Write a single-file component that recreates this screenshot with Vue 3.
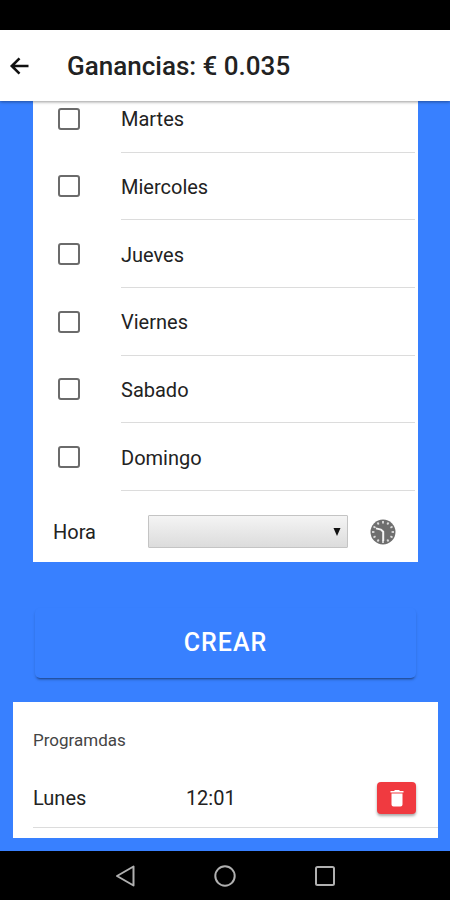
<script setup>
import { ref } from 'vue'

const days = ref([
  { name: 'Martes', checked: false },
  { name: 'Miercoles', checked: false },
  { name: 'Jueves', checked: false },
  { name: 'Viernes', checked: false },
  { name: 'Sabado', checked: false },
  { name: 'Domingo', checked: false },
])
const hour = ref('')
const scheduled = ref([{ day: 'Lunes', time: '12:01' }])
const ticks = Array.from({ length: 12 }, (_, i) => i * 30)

function removeItem(index) {
  scheduled.value.splice(index, 1)
}
</script>

<template>
  <div class="screen">
    <div class="status-bar"></div>

    <header class="toolbar">
      <button class="back" type="button" aria-label="Volver">
        <svg viewBox="0 0 20 20" width="20" height="20">
          <path d="M19.500 10H3M10.500 2.300L2.800 10l7.700 7.700" fill="none" stroke="#111" stroke-width="2.6" />
        </svg>
      </button>
      <h1>Ganancias: € 0.035</h1>
    </header>

    <main class="content">
      <section class="form-card">
        <ul class="days">
          <li v-for="day in days" :key="day.name">
            <label class="day">
              <input v-model="day.checked" type="checkbox" />
              <span class="day-name">{{ day.name }}</span>
            </label>
          </li>
        </ul>
        <div class="hour">
          <label for="hour">Hora</label>
          <div class="select-wrap">
            <select id="hour" v-model="hour">
              <option value=""></option>
              <option value="12:01">12:01</option>
            </select>
            <svg class="caret" viewBox="0 0 8 8" width="8" height="8">
              <path d="M0.500 0h7L4 8z" fill="#111" />
            </svg>
          </div>
          <svg class="clock" viewBox="0 0 26 26" width="26" height="26">
            <circle cx="13" cy="13" r="12.5" fill="#6e6e6e" />
            <g stroke="#dcdcdc" stroke-width="1.8">
              <path v-for="t in ticks" :key="t" d="M13 2v2.400" :transform="`rotate(${t} 13 13)`" />
            </g>
            <path d="M13.200 22V12.800L11 10.600 6 9.400" fill="none" stroke="#f4f4f4" stroke-width="2" stroke-linejoin="round" />
          </svg>
        </div>
      </section>

      <button class="create" type="button">CREAR</button>

      <section class="list-card">
        <h2>Programdas</h2>
        <ul class="scheduled">
          <li v-for="(item, i) in scheduled" :key="item.day">
            <span>{{ item.day }}</span>
            <span>{{ item.time }}</span>
            <button class="remove" type="button" aria-label="Eliminar" @click="removeItem(i)">
              <svg viewBox="0 0 14 18" width="14" height="18">
                <path d="M0.500 2h3.500L5 1h4l1 1h3.500v1.500H.500zM1.500 4.500h11V15.500a2 2 0 0 1-2 2H3.500a2 2 0 0 1-2-2z" fill="#fff" />
              </svg>
            </button>
          </li>
        </ul>
      </section>
    </main>

    <nav class="nav-bar">
      <button type="button" aria-label="Atrás">
        <svg viewBox="0 0 22 22" width="22" height="22">
          <path d="M19.500 1.500v19L3 11z" />
        </svg>
      </button>
      <button type="button" aria-label="Inicio">
        <svg viewBox="0 0 22 22" width="22" height="22">
          <circle cx="11" cy="11" r="9.700" />
        </svg>
      </button>
      <button type="button" aria-label="Recientes">
        <svg viewBox="0 0 22 22" width="22" height="22">
          <rect x="2" y="2" width="18" height="18" rx="1.500" />
        </svg>
      </button>
    </nav>
  </div>
</template>

<style>
body {
  margin: 0;
}
</style>

<style scoped>
.screen {
  display: flex;
  flex-direction: column;
  min-height: 100vh;
  background: #3880ff;
  color: #222;
  font-family: Roboto, "Liberation Sans", sans-serif;
  font-size: 20px;
  line-height: 24px;
}

button {
  padding: 0;
  border: 0;
  background: none;
  font: inherit;
  cursor: pointer;
}

svg {
  display: block;
}

ul {
  margin: 0;
  padding: 0;
  list-style: none;
}

.status-bar {
  height: 30px;
  background: #000;
}

.toolbar {
  position: relative;
  z-index: 1;
  display: flex;
  align-items: center;
  gap: 38px;
  height: 71px;
  padding-left: 9px;
  background: #fff;
  box-shadow: 0 1px 3px rgba(0, 0, 0, 0.4);
}

.toolbar h1 {
  margin: 0;
  font-size: 26px;
  line-height: 30px;
  font-weight: 500;
}

.content {
  flex: 1;
}

.form-card {
  margin: -16px 32px 0 33px;
  background: #fff;
}

.days {
  display: grid;
  grid-auto-rows: 1fr;
  height: 406px;
}

.day {
  display: flex;
  height: 100%;
  padding: 0 3px 0 25px;
}

.day input {
  appearance: none;
  align-self: center;
  box-sizing: border-box;
  width: 22px;
  height: 22px;
  margin: 0 41px 0 0;
  border: 2px solid #6b6b6b;
  border-radius: 3px;
  background: #fff;
}

.day input:checked {
  border-color: #3880ff;
  background: #3880ff;
}

.day-name {
  flex: 1;
  display: flex;
  align-items: center;
  padding-top: 2px;
  border-bottom: 1px solid #dcdcdc;
}

.hour {
  display: flex;
  align-items: center;
  box-sizing: border-box;
  height: 71px;
  padding: 10px 22px 0 20px;
}

.hour label {
  width: 95px;
}

.select-wrap {
  position: relative;
  flex: 1;
}

.select-wrap select {
  appearance: none;
  display: block;
  box-sizing: border-box;
  width: 100%;
  height: 33px;
  padding: 0 24px 0 8px;
  border: 1px solid #c4c4c4;
  border-radius: 1px;
  background: linear-gradient(#f4f4f4, #dcdcdc);
  font: inherit;
}

.caret {
  position: absolute;
  top: 13px;
  right: 7px;
  pointer-events: none;
}

.clock {
  margin-left: 22px;
}

.create {
  display: block;
  width: calc(100% - 69px);
  height: 70px;
  margin: 46px 34px 24px 35px;
  border-radius: 5px;
  background: #3880ff;
  box-shadow: 0 3px 2px -2px rgba(0, 0, 0, 0.35), 0 2px 3px rgba(0, 0, 0, 0.16);
  color: #fff;
  font-size: 25px;
  font-weight: 500;
  letter-spacing: 1px;
}

.list-card {
  margin: 0 12px 12px 13px;
  padding: 26px 0 10px 20px;
  background: #fff;
}

.list-card h2 {
  margin: 0;
  color: #444;
  font-size: 17px;
  line-height: 24px;
  font-weight: 400;
}

.scheduled {
  margin-top: 16px;
}

.scheduled li {
  display: grid;
  grid-template-columns: 4fr 5fr auto;
  align-items: center;
  height: 59px;
  padding-right: 22px;
  border-bottom: 1px solid #dcdcdc;
}

.remove {
  display: grid;
  place-items: center;
  width: 39px;
  height: 32px;
  border-radius: 4px;
  background: #f03a40;
  box-shadow: 0 2px 3px rgba(0, 0, 0, 0.35);
}

.nav-bar {
  display: flex;
  justify-content: center;
  align-items: center;
  gap: 78px;
  height: 49px;
  background: #000;
}

.nav-bar svg {
  fill: none;
  stroke: #b0b0b0;
  stroke-width: 2;
  stroke-linejoin: round;
}
</style>
